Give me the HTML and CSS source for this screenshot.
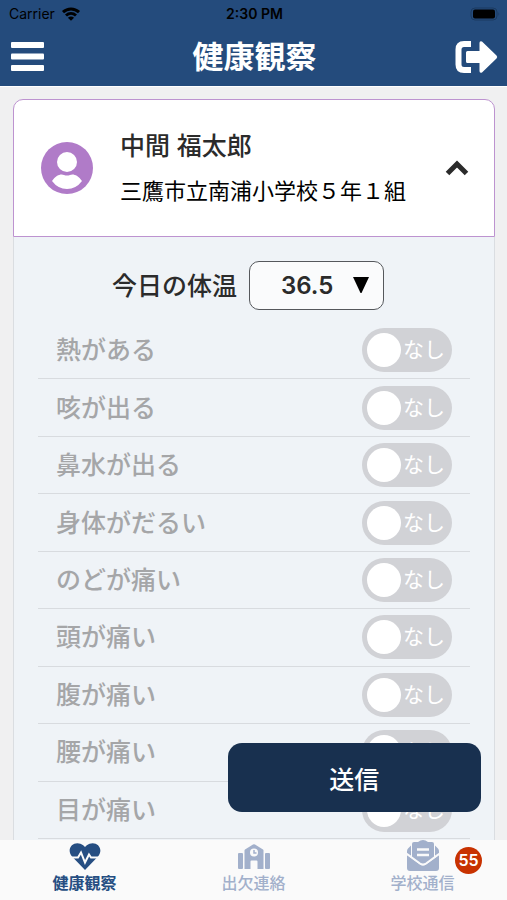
FILE: index.html
```html
<!DOCTYPE html>
<html lang="ja">
<head>
    <meta charset="UTF-8">
    <meta name="viewport" content="width=device-width, initial-scale=1.0">
    <title>健康観察</title>
    <link rel="stylesheet" href="styles.css">
</head>
<body>
    <header class="header">
        <div class="status-bar">
            <div class="status-carrier">
                <span>Carrier</span>
                <svg width="20" height="14" viewBox="0 0 20 14" fill="none" stroke="#000" stroke-width="3">
                    <path d="M2 5.2C6.6 .8 13.400 .8 18 5.200"/>
                    <path d="M5 8.500C8 5.800 12 5.800 15 8.500"/>
                    <path d="M10 13.800L6.900 10.700Q10 8.400 13.100 10.700Z" fill="#000" stroke="none"/>
                </svg>
            </div>
            <span class="status-time">2:30 PM</span>
            <div class="status-battery">
                <svg width="30" height="14" viewBox="0 0 30 14">
                    <rect x="1" y="1" width="26" height="12" rx="4" fill="none" stroke="#1b3a60" stroke-width="1"/>
                    <rect x="3" y="2.500" width="22" height="9" rx="2" fill="#000"/>
                    <path d="M28.500 5v4q1.500-2 0-4z" fill="#1b3a60"/>
                </svg>
            </div>
        </div>
        <div class="title-bar">
            <button type="button" class="icon-button" aria-label="メニュー">
                <svg width="33" height="29" viewBox="0 0 33 29" fill="#fff">
                    <rect width="33" height="6" rx="1"/>
                    <rect y="11.500" width="33" height="6" rx="1"/>
                    <rect y="23" width="33" height="6" rx="1"/>
                </svg>
            </button>
            <h1>健康観察</h1>
            <button type="button" class="icon-button" aria-label="ログアウト">
                <svg width="44" height="34" viewBox="0 0 44 34">
                    <path d="M17 4H10Q4.500 4 4.500 9.500V24.500Q4.500 30 10 30H17" fill="none" stroke="#fff" stroke-width="6"/>
                    <path d="M13.500 11H25.500V3Q25.500 .500 28 1.500L42.500 15.500Q44 17 42.500 18.500L28 32.500Q25.500 33.500 25.500 31V23H13.500Q12 23 12 21.500V12.500Q12 11 13.500 11Z" fill="#fff"/>
                </svg>
            </button>
        </div>
    </header>

    <main class="content">
        <button type="button" class="student" aria-expanded="true">
            <svg class="avatar" width="52" height="52" viewBox="0 0 52 52">
                <circle cx="26" cy="26" r="26" fill="#b07bc8"/>
                <circle cx="26" cy="20" r="10" fill="#fff"/>
                <path d="M11 39C15 33 20 31.500 23 33Q26 34 29 33C32 31.500 37 33 41 39Q35 47 26 47Q17 47 11 39Z" fill="#fff"/>
            </svg>
            <span class="student-text">
                <span class="student-name">中間 福太郎</span>
                <span class="student-school">三鷹市立南浦小学校５年１組</span>
            </span>
            <svg width="24" height="16" viewBox="0 0 24 16" fill="none" stroke="#2b2b2b" stroke-width="5">
                <path d="M2.500 13.500L12 4L21.500 13.500"/>
            </svg>
        </button>

        <form class="check-form" id="check-form">
            <div class="temperature">
                <label for="temperature">今日の体温</label>
                <div class="select-box">
                    <select id="temperature">
                        <option>36.5</option>
                        <option>36.6</option>
                        <option>36.7</option>
                    </select>
                    <svg class="select-arrow" width="16" height="16" viewBox="0 0 16 16"><path d="M0 0H16L8.500 16H7.500Z"/></svg>
                </div>
            </div>
            <ul class="symptoms">
                <li><label for="fever">熱がある</label><span class="switch"><input type="checkbox" id="fever"><span>なし</span></span></li>
                <li><label for="cough">咳が出る</label><span class="switch"><input type="checkbox" id="cough"><span>なし</span></span></li>
                <li><label for="nose">鼻水が出る</label><span class="switch"><input type="checkbox" id="nose"><span>なし</span></span></li>
                <li><label for="tired">身体がだるい</label><span class="switch"><input type="checkbox" id="tired"><span>なし</span></span></li>
                <li><label for="throat">のどが痛い</label><span class="switch"><input type="checkbox" id="throat"><span>なし</span></span></li>
                <li><label for="head">頭が痛い</label><span class="switch"><input type="checkbox" id="head"><span>なし</span></span></li>
                <li><label for="stomach">腹が痛い</label><span class="switch"><input type="checkbox" id="stomach"><span>なし</span></span></li>
                <li><label for="back">腰が痛い</label><span class="switch"><input type="checkbox" id="back"><span>なし</span></span></li>
                <li><label for="eye">目が痛い</label><span class="switch"><input type="checkbox" id="eye"><span>なし</span></span></li>
            </ul>
        </form>
    </main>

    <button type="submit" form="check-form" class="send-button">送信</button>

    <nav class="tab-bar">
        <a href="#health" class="tab active">
            <svg width="32" height="28" viewBox="0 0 32 28">
                <path d="M16 27L3 13.500C-4 5 6-4 14.500 2.500L16 4L17.500 2.500C26-4 36 5 29 13.500Z" fill="#264e82"/>
                <path d="M0 14.500H9L12 9.500L16 19.500L20 11.500L22 14.500H32" fill="none" stroke="#fafafa" stroke-width="2"/>
            </svg>
            <span>健康観察</span>
        </a>
        <a href="#absence" class="tab">
            <svg width="32" height="28" viewBox="0 0 32 28" fill="#a2b0cb">
                <rect y="10" width="5" height="16" rx="1"/>
                <rect x="27" y="10" width="5" height="16" rx="1"/>
                <path d="M6.500 26V7.500Q6.500 7 7 6.500L15 1.500Q16 1 17 1.500L25 6.500Q25.500 7 25.500 7.500V26H19.500V18.500Q19.500 17.500 18.500 17.500H13.500Q12.500 17.500 12.500 18.500V26Z"/>
                <circle cx="16" cy="9.500" r="4" fill="#fafafa"/>
                <path d="M16 7V10H18.500" fill="none" stroke="#a2b0cb" stroke-width="1.500"/>
            </svg>
            <span>出欠連絡</span>
        </a>
        <a href="#news" class="tab">
            <svg width="32" height="31" viewBox="0 0 32 31" fill="#a2b0cb">
                <path d="M5 17V4Q5 2 7 2H11Q16-2 21 2H25Q27 2 27 4V17L19 23.500Q16 25.500 13 23.500Z"/>
                <path d="M4 5.500L1 8.500Q0 9.500 0 11V13L4 16ZM28 5.500L31 8.500Q32 9.500 32 11V13L28 16Z"/>
                <path d="M0 15L13 24.500Q16 26.500 19 24.500L32 15V28Q32 31 29 31H3Q0 31 0 28Z"/>
                <path d="M0 14L13 23.500Q16 25.500 19 23.500L32 14" fill="none" stroke="#fafafa" stroke-width="2"/>
                <path d="M10 9.500H22M10 15H22" stroke="#fafafa" stroke-width="2.500"/>
            </svg>
            <span>学校通信</span>
            <span class="badge">55</span>
        </a>
    </nav>
</body>
</html>
```
FILE: styles.css
```css
* {
    box-sizing: border-box;
}

body {
    display: flex;
    flex-direction: column;
    height: 100vh;
    margin: 0;
    background-color: #f0f0f1;
    color: #2b2b2b;
    font-family: Inter, "Noto Sans CJK JP", sans-serif;
    overflow: hidden;
}

button, select {
    font-family: inherit;
    color: inherit;
    cursor: pointer;
}

svg {
    display: block;
    flex: none;
}

/* Header */
.header {
    flex: none;
    background-color: #244b7c;
    border-bottom: 1px solid #fff;
}

.status-bar {
    display: grid;
    grid-template-columns: 1fr auto 1fr;
    align-items: center;
    height: 27px;
    padding: 0 7px 0 9px;
    color: #000;
    font-size: 14px;
}

.status-carrier {
    display: flex;
    align-items: center;
    gap: 6px;
}

.status-time {
    font-weight: 600;
}

.status-battery {
    display: flex;
    justify-content: flex-end;
}

.title-bar {
    display: grid;
    grid-template-columns: 1fr auto 1fr;
    align-items: center;
    height: 59px;
    padding: 0 9px 0 11px;
}

.title-bar h1 {
    margin: 0;
    color: #fff;
    font-size: 31px;
    line-height: 40px;
    font-weight: bold;
}

.icon-button {
    justify-self: start;
    padding: 0;
    border: none;
    background: none;
}

.icon-button:last-child {
    justify-self: end;
}

/* Student card */
.content {
    flex: 1;
    display: flex;
    flex-direction: column;
    min-height: 0;
    padding: 12px 12px 0 13px;
    overflow: hidden;
}

.student {
    display: flex;
    flex: none;
    align-items: center;
    height: 138px;
    padding: 0 25px 0 27px;
    border: 1px solid #bd93d0;
    border-radius: 10px 10px 0 0;
    background-color: #fff;
    text-align: left;
}

.student-text {
    display: flex;
    flex: 1;
    flex-direction: column;
    gap: 13px;
    margin-left: 27px;
    white-space: nowrap;
}

.student-name {
    font-size: 25px;
    line-height: 32px;
    font-weight: 500;
}

.student-school {
    color: #000;
    font-size: 22px;
    line-height: 32px;
}

/* Check form */
.check-form {
    display: flex;
    flex: 1;
    flex-direction: column;
    border: 1px solid #dadde1;
    border-width: 0 1px;
    background-color: #eff3f7;
}

.temperature {
    display: flex;
    align-items: center;
    justify-content: center;
    gap: 12px;
    padding: 24px 12px 12px 0;
    font-size: 25px;
    line-height: 32px;
    font-weight: 500;
}

.select-box {
    position: relative;
}

.select-box select {
    display: block;
    width: 135px;
    height: 49px;
    padding: 0 31px;
    border: 1px solid #55585c;
    border-radius: 10px;
    background-color: #fafbfc;
    font-size: 24px;
    font-weight: 600;
    appearance: none;
}

.select-arrow {
    position: absolute;
    top: 16px;
    right: 15px;
    pointer-events: none;
}

.symptoms {
    display: flex;
    flex: 1;
    flex-direction: column;
    margin: 0 24px;
    padding: 0 0 1px;
    list-style: none;
}

.symptoms li {
    display: flex;
    flex: 1 0 57px;
    align-items: center;
    justify-content: space-between;
    padding: 0 18px;
    border-bottom: 1px solid #d8dbdf;
    color: #a5a6a8;
    font-size: 25px;
    line-height: 32px;
    font-weight: 500;
}

.switch {
    display: flex;
    align-items: center;
    width: 90px;
    height: 44px;
    padding: 0 5px;
    border-radius: 22px;
    background-color: #d1d2d6;
    color: #fff;
    font-size: 21px;
    font-weight: normal;
    white-space: nowrap;
}

.switch input {
    flex: none;
    width: 34px;
    height: 34px;
    margin: 0 2px 0 0;
    border-radius: 50%;
    background-color: #fff;
    appearance: none;
}

/* Floating send button */
.send-button {
    position: fixed;
    right: 26px;
    bottom: 88px;
    width: 50%;
    height: 69px;
    border: none;
    border-radius: 14px;
    background-color: #18304f;
    color: #fff;
    font-size: 25px;
    font-weight: 500;
}

/* Bottom tabs */
.tab-bar {
    display: grid;
    flex: none;
    grid-template-columns: repeat(3, 1fr);
    height: 60px;
    background-color: #fafafa;
}

.tab {
    position: relative;
    display: flex;
    flex-direction: column;
    align-items: center;
    justify-content: flex-end;
    padding-bottom: 6px;
    color: #a2b0cb;
    font-size: 16px;
    line-height: 24px;
    font-weight: 500;
    text-decoration: none;
}

.tab.active {
    color: #264e82;
    font-weight: bold;
}

.badge {
    position: absolute;
    top: 7px;
    right: 25px;
    width: 27px;
    height: 27px;
    border-radius: 50%;
    background-color: #c83200;
    color: #fff;
    font-size: 16px;
    line-height: 27px;
    font-weight: 600;
    text-align: center;
}
```
